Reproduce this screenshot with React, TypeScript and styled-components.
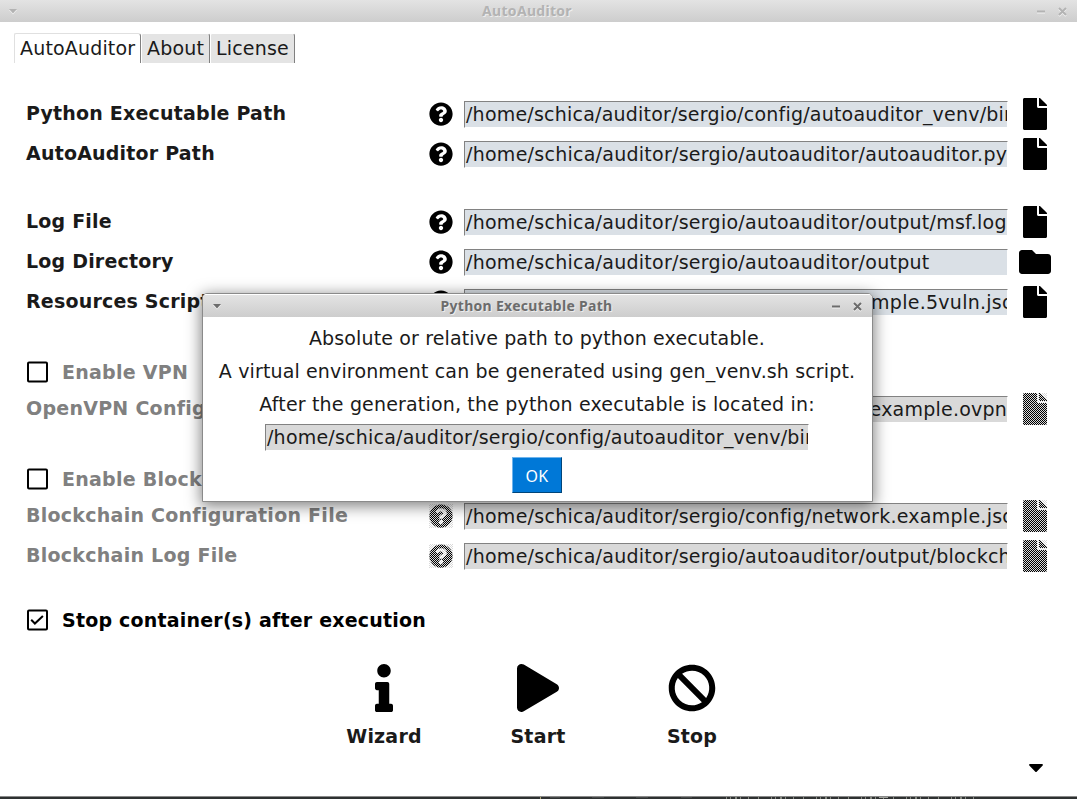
import React from "react";
import styled, { createGlobalStyle, css } from "styled-components";
import { FaQuestionCircle, FaFile, FaFolder, FaInfo, FaPlay, FaBan, FaCaretDown } from "react-icons/fa";

const GlobalStyle = createGlobalStyle`
  * { box-sizing: border-box; }
  body { margin: 0; background: #fff; overflow: hidden; }
  svg { display: block; }
`;

const Window = styled.div`
  position: relative;
  display: flex;
  flex-direction: column;
  width: 1077px;
  height: 799px;
  overflow: hidden;
  background: #fff;
  color: #1a1a1a;
  font: 19px/24px "DejaVu Sans", sans-serif;
  white-space: nowrap;
`;

const TitleBar = styled.header<{ $active?: boolean }>`
  display: grid;
  grid-template-columns: 60px 1fr 83px;
  align-items: center;
  flex: none;
  height: ${(p) => (p.$active ? 23 : 22)}px;
  padding-left: ${(p) => (p.$active ? 1 : 0)}px;
  background: linear-gradient(#e3e3e3, #cdcdcd);
  border-top: ${(p) => (p.$active ? "1px solid #fff" : "none")};
  color: ${(p) => (p.$active ? "#6c6c6c" : "#b3b3b3")};
`;

const TitleText = styled.div`
  font: bold 14px/20px "Noto Sans", sans-serif;
  letter-spacing: 0.3px;
  text-align: center;
  text-shadow: 1px 1px 0 rgba(255, 255, 255, 0.6);
`;

const TitleControls = styled.div<{ $end?: boolean }>`
  display: flex;
  gap: 13px;
  padding: ${(p) => (p.$end ? "0 10px 0 0" : "1px 0 0 9px")};
  justify-content: ${(p) => (p.$end ? "flex-end" : "flex-start")};
  svg { filter: drop-shadow(0 1px 0 rgba(255, 255, 255, 0.7)); }
`;

const Tabs = styled.nav`
  display: flex;
  flex: none;
  padding: 11px 0 0 14px;
`;

const Tab = styled.div<{ $selected?: boolean; $width: number }>`
  width: ${(p) => p.$width}px;
  height: 30px;
  padding: 2px 0 0 5px;
  letter-spacing: 0.17px;
  background: ${(p) => (p.$selected ? "#fff" : "#e4e4e4")};
  border-left: 1px solid ${(p) => (p.$selected ? "#e0e0e0" : "#fff")};
  border-top: 1px solid ${(p) => (p.$selected ? "#e0e0e0" : "#fff")};
  border-right: 1px solid #808080;
  border-radius: 2px 3px 0 0;
`;

const Form = styled.main`
  display: flex;
  flex-direction: column;
  padding: 31px 0 0 26px;
`;

const Group = styled.section<{ $gap: number }>`
  margin-bottom: ${(p) => p.$gap}px;
`;

const Row = styled.div`
  display: grid;
  grid-template-columns: 403px 35px 544px 54px;
  align-items: center;
  height: 40px;
`;

const Label = styled.div<{ $disabled?: boolean; $black?: boolean }>`
  font-weight: bold;
  letter-spacing: ${(p) => (p.$disabled ? 0.26 : 0.2)}px;
  color: ${(p) => (p.$disabled ? "#808080" : p.$black ? "#000" : "#1a1a1a")};
  padding-bottom: 2px;
`;

const Field = styled.div<{ $readonly?: boolean; $tight?: boolean }>`
  width: 544px;
  height: 27px;
  padding: 0 0 0 1px;
  overflow: hidden;
  letter-spacing: ${(p) => (p.$tight ? 0.22 : 0.265)}px;
  border: 1px solid;
  border-color: #828282 #fff #fff #828282;
  background: ${(p) => (p.$readonly ? "#d9d9d9" : "#dae0e6")};
`;

const IconBox = styled.div<{ $disabled?: boolean }>`
  position: relative;
  width: fit-content;
  color: #000;
  ${(p) =>
    p.$disabled &&
    css`
      &::after {
        content: "";
        position: absolute;
        inset: 0;
        background: repeating-conic-gradient(#d9d9d9 0 25%, transparent 0 50%) 0 0 / 2px 2px;
      }
    `}
`;

const Browse = styled.div`
  display: flex;
  justify-content: center;
`;

const CheckRow = styled.div`
  display: flex;
  align-items: center;
  gap: 14px;
  height: 34px;

  ${Label} {
    padding-bottom: 0;
  }
`;

const Actions = styled.div`
  display: flex;
  padding: 27px 0 0 281px;
`;

const Action = styled.div`
  display: flex;
  flex-direction: column;
  align-items: center;
  gap: 12px;
  width: 154px;
  color: #000;
`;

const Expander = styled.div`
  display: flex;
  justify-content: flex-end;
  padding: 5px 31.5px 0 0;
  color: #000;
`;

const Desktop = styled.footer`
  margin-top: auto;
  height: 3px;
  border-top: 1px solid #8a8a8a;
  background: #2e3131;
`;

const Dialog = styled.div`
  position: absolute;
  left: 202px;
  top: 293px;
  width: 671px;
  height: 209px;
  border: 1px solid #8a8a8a;
  border-radius: 5px 5px 0 0;
  background: #fff;
  box-shadow: 0 3px 15px 1px rgba(0, 0, 0, 0.5);
  overflow: hidden;
`;

const DialogBody = styled.div`
  display: flex;
  flex-direction: column;
  align-items: center;
  padding: 9px 1px 0 0;
`;

const Paragraph = styled.p`
  margin: 0 0 9px;
  letter-spacing: 0.14px;

  &:last-of-type {
    margin-bottom: 8px;
    letter-spacing: 0.17px;
  }
`;

const OkButton = styled.button`
  width: 50px;
  height: 36px;
  margin-top: 6px;
  padding: 2px 0 0;
  border: 1px solid;
  border-color: #6fb4ec #00457a #00457a #6fb4ec;
  background: #0078d7;
  color: #fff;
  font: 16px/20px "Noto Sans", sans-serif;
  letter-spacing: 0.3px;
`;

const MenuGlyph = () => (
  <svg width="8" height="5" viewBox="0 0 8 5"><path d="M0 0h8L4 4.6z" fill="currentColor" /></svg>
);

const MinCloseGlyphs = () => (
  <>
    <svg width="9" height="9" viewBox="0 0 9 9"><path d="M1 4.5h8" stroke="currentColor" strokeWidth="2" /></svg>
    <svg width="9" height="9" viewBox="0 0 9 9"><path d="M1 1l7 7M8 1l-7 7" stroke="currentColor" strokeWidth="2" /></svg>
  </>
);

const Checkbox = ({ checked }: { checked?: boolean }) => (
  <svg width="22" height="22" viewBox="0 0 22 22" fill="none" stroke="#000" strokeWidth="2">
    <rect x="2" y="1.5" width="19" height="19" rx="1" />
    {checked && <path d="M5.2 10.8l3.7 3.7 8-7.6" />}
  </svg>
);

const BackgroundSpecks = () => (
  <svg width="1077" height="2" viewBox="0 0 1077 2">
    <path d="M540 1h1" stroke="#b0a878" strokeWidth="2" />
    <path d="M550 .5h10M592 .5h12M636 .5h12M681 .5h11" stroke="#454848" />
    <path d="M726 1h250" stroke="#858880" strokeWidth="2" strokeDasharray="1 3 1 4 2 3 1 7 1 9 1 12" />
    <path d="M879 .5h9" stroke="#a0a29c" />
  </svg>
);

type PathRowProps = { label: string; value: string; disabled?: boolean; folder?: boolean; tight?: boolean };

const PathRow = ({ label, value, disabled, folder, tight }: PathRowProps) => (
  <Row>
    <Label $disabled={disabled}>{label}</Label>
    <IconBox $disabled={disabled}><FaQuestionCircle size={24} /></IconBox>
    <Field $readonly={disabled} $tight={tight}>{value}</Field>
    <Browse>
      <IconBox $disabled={disabled}>
        {folder ? <FaFolder size={32} /> : <FaFile style={{ width: 24, height: 32 }} />}
      </IconBox>
    </Browse>
  </Row>
);

export default function App() {
  return (
    <Window>
      <GlobalStyle />
      <TitleBar>
        <TitleControls><MenuGlyph /></TitleControls>
        <TitleText>AutoAuditor</TitleText>
        <TitleControls $end><MinCloseGlyphs /></TitleControls>
      </TitleBar>
      <Tabs>
        <Tab $selected $width={127}>AutoAuditor</Tab>
        <Tab $width={69}>About</Tab>
        <Tab $width={85}>License</Tab>
      </Tabs>
      <Form>
        <Group $gap={28}>
          <PathRow label="Python Executable Path" value="/home/schica/auditor/sergio/config/autoauditor_venv/bin/python" tight />
          <PathRow label="AutoAuditor Path" value="/home/schica/auditor/sergio/autoauditor/autoauditor.py" />
        </Group>
        <Group $gap={33}>
          <PathRow label="Log File" value="/home/schica/auditor/sergio/autoauditor/output/msf.log" />
          <PathRow label="Log Directory" value="/home/schica/auditor/sergio/autoauditor/output" folder />
          <PathRow label="Resources Script File" value="/home/schica/auditor/sergio/config/rc.example.5vuln.json" />
        </Group>
        <Group $gap={33}>
          <CheckRow><Checkbox /><Label $disabled>Enable VPN</Label></CheckRow>
          <PathRow label="OpenVPN Configuration File" value="/home/schica/auditor/sergio/config/client.example.ovpn" disabled tight />
        </Group>
        <Group $gap={27}>
          <CheckRow><Checkbox /><Label $disabled>Enable Blockchain</Label></CheckRow>
          <PathRow label="Blockchain Configuration File" value="/home/schica/auditor/sergio/config/network.example.json" disabled />
          <PathRow label="Blockchain Log File" value="/home/schica/auditor/sergio/autoauditor/output/blockchain.log" disabled />
        </Group>
        <CheckRow><Checkbox checked /><Label $black>Stop container(s) after execution</Label></CheckRow>
        <Actions>
          <Action><FaInfo style={{ width: 18, height: 48 }} /><Label>Wizard</Label></Action>
          <Action><FaPlay style={{ width: 42, height: 48 }} /><Label>Start</Label></Action>
          <Action><FaBan size={48} /><Label>Stop</Label></Action>
        </Actions>
      </Form>
      <Expander><FaCaretDown style={{ width: 20, height: 24 }} /></Expander>
      <Desktop><BackgroundSpecks /></Desktop>
      <Dialog>
        <TitleBar $active>
          <TitleControls><MenuGlyph /></TitleControls>
          <TitleText>Python Executable Path</TitleText>
          <TitleControls $end><MinCloseGlyphs /></TitleControls>
        </TitleBar>
        <DialogBody>
          <Paragraph>Absolute or relative path to python executable.</Paragraph>
          <Paragraph>A virtual environment can be generated using gen_venv.sh script.</Paragraph>
          <Paragraph>After the generation, the python executable is located in:</Paragraph>
          <Field $readonly $tight>/home/schica/auditor/sergio/config/autoauditor_venv/bin/python</Field>
          <OkButton>OK</OkButton>
        </DialogBody>
      </Dialog>
    </Window>
  );
}
